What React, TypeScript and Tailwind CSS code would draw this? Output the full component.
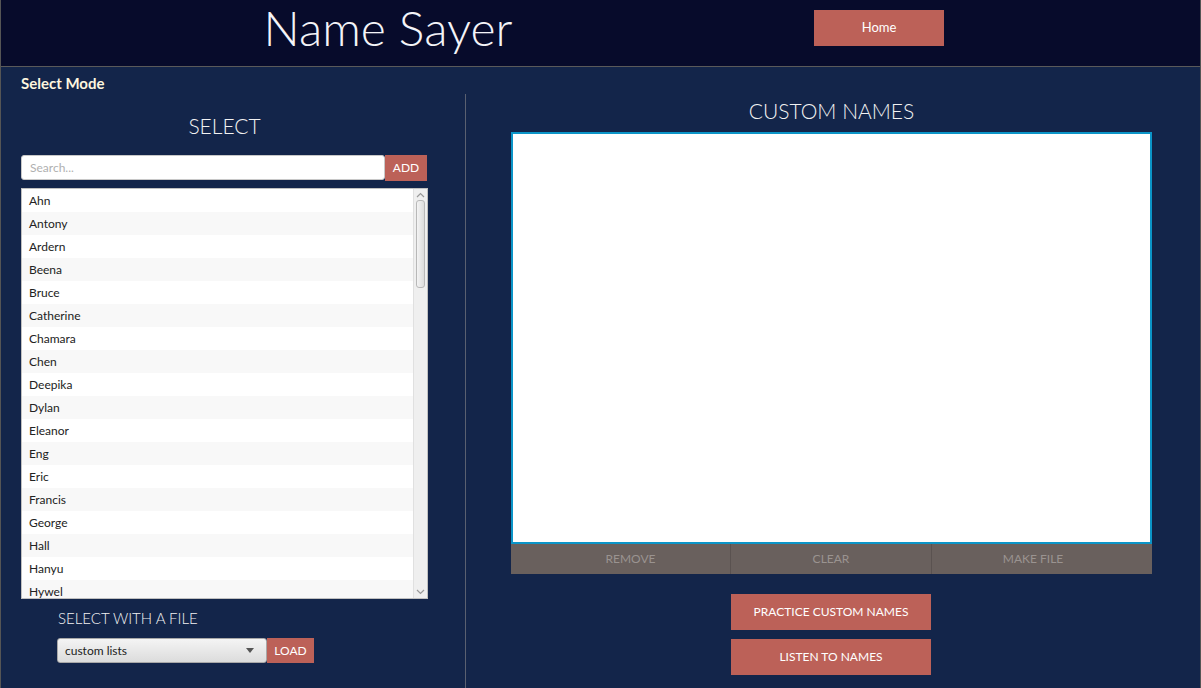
import React from "react";

const names = ["Ahn","Antony","Ardern","Beena","Bruce","Catherine","Chamara","Chen","Deepika","Dylan","Eleanor","Eng","Eric","Francis","George","Hall","Hanyu","Hywel"];

const font = { fontFamily: "Lato, 'Open Sans', sans-serif" };

export default function App() {
  return (
    <div className="w-[1201px] h-[688px] bg-[#13254a] flex flex-col overflow-hidden border-x border-[#555]" style={font}>
      <div className="h-[67px] shrink-0 bg-[#070b2b] border-b border-[#5a5a5a] flex items-start">
        <div className="w-[774px] flex justify-center">
          <span className="text-[48px] leading-[56px] text-[#f4f4f8] font-light">Name Sayer</span>
        </div>
        <button className="mt-[10px] ml-[39px] w-[130px] h-[36px] bg-[#bc6158] text-white text-[13px]">Home</button>
      </div>
      <div className="flex-1 flex flex-col">
        <div className="pl-[20px] pt-[7px] h-[26px] text-[15px] font-bold text-[#fdf6df] leading-[18px]">Select Mode</div>
        <div className="flex flex-1">
          <div className="w-[464px] flex flex-col pl-[20px]">
            <div className="w-[407px] text-center text-[21px] text-[#f2f2f2] font-light mt-[20px] leading-[26px]">SELECT</div>
            <div className="flex mt-[16px] w-[407px]">
              <div className="w-[364px] h-[25px] bg-white rounded-[3px] border border-[#c8c8c8] flex items-center pl-[8px] text-[12px] text-[#b0b0b0]">Search...</div>
              <button className="w-[42px] h-[26px] bg-[#bc6158] text-white text-[12px]">ADD</button>
            </div>
            <div className="mt-[7px] w-[407px] h-[411px] bg-white border border-[#c0c0c0] flex">
              <div className="flex-1 overflow-hidden flex flex-col">
                {names.map((n, i) => (
                  <div key={n} className={`h-[23px] shrink-0 flex items-center pl-[7px] text-[12px] text-[#222] ${i % 2 === 1 ? "bg-[#f8f8f8]" : "bg-white"}`}>{n}</div>
                ))}
              </div>
              <div className="w-[14px] bg-[#efefef] border-l border-[#e0e0e0] flex flex-col items-center">
                <svg width="9" height="6" viewBox="0 0 9 6" className="mt-[3px]"><path d="M1 5 L4.5 1.5 L8 5" fill="none" stroke="#999" strokeWidth="1.2"/></svg>
                <div className="mt-[2px] w-[9px] h-[88px] rounded-[3px] border border-[#b8b8b8] bg-gradient-to-r from-[#f4f4f4] to-[#dcdcdc]" />
                <div className="flex-1" />
                <svg width="9" height="6" viewBox="0 0 9 6" className="mb-[3px]"><path d="M1 1 L4.5 4.5 L8 1" fill="none" stroke="#999" strokeWidth="1.2"/></svg>
              </div>
            </div>
            <div className="pl-[37px] mt-[9px] text-[15px] text-[#f2f2f2] font-light leading-[20px]">SELECT WITH A FILE</div>
            <div className="pl-[36px] mt-[10px] flex">
              <div className="w-[210px] h-[25px] rounded-[3px] border border-[#a8a8a8] bg-gradient-to-b from-[#f4f4f4] to-[#dcdcdc] flex items-center pl-[7px] pr-[12px] text-[12px] text-[#222]">
                <span className="flex-1">custom lists</span>
                <svg width="8" height="5" viewBox="0 0 8 5"><path d="M0 0 L8 0 L4 5 Z" fill="#555"/></svg>
              </div>
              <button className="w-[47px] h-[25px] bg-[#bc6158] text-white text-[12px]">LOAD</button>
            </div>
          </div>
          <div className="w-px bg-[#5a6070] mt-[1px]" />
          <div className="flex-1 flex flex-col pl-[45px]">
            <div className="w-[641px] text-center text-[21px] text-[#f2f2f2] font-light leading-[26px] mt-[5px]">CUSTOM NAMES</div>
            <div className="mt-[8px] w-[641px] h-[412px] bg-white border-2 border-[#0b95c8]" />
            <div className="w-[641px] h-[30px] bg-[#69605d] flex text-[12px] text-[#9a9390]">
              <div className="w-[220px] flex items-center justify-center pl-[20px] border-r border-[#5a5250]">REMOVE</div>
              <div className="w-[201px] flex items-center justify-center border-r border-[#5a5250]">CLEAR</div>
              <div className="flex-1 flex items-center justify-center pr-[18px]">MAKE FILE</div>
            </div>
            <div className="pl-[220px] mt-[20px] flex flex-col gap-[9px]">
              <button className="w-[200px] h-[36px] bg-[#bc6158] text-white text-[12px]">PRACTICE CUSTOM NAMES</button>
              <button className="w-[200px] h-[36px] bg-[#bc6158] text-white text-[12px]">LISTEN TO NAMES</button>
            </div>
          </div>
        </div>
      </div>
    </div>
  );
}
